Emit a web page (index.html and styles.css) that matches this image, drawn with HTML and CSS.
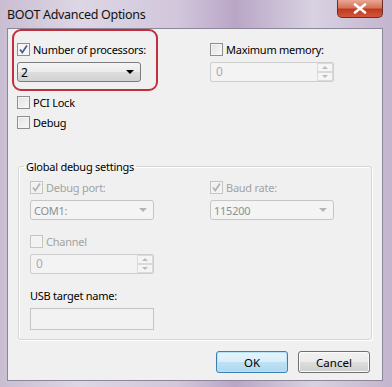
FILE: index.html
```html
<!DOCTYPE html>
<html lang="en">
<head>
    <meta charset="UTF-8">
    <title>BOOT Advanced Options</title>
    <link rel="stylesheet" href="styles.css">
</head>
<body>
    <div class="window">
        <div class="titlebar">
            <span class="title">BOOT Advanced Options</span>
            <button class="close" type="button">
                <svg width="14" height="11" viewBox="0 0 14 11"><path d="M2 1.5 L12 9.5 M12 1.5 L2 9.5" stroke="#fff" stroke-width="2.6" stroke-linecap="round"/></svg>
            </button>
        </div>

        <div class="client">
            <div class="highlight"></div>

            <div class="options">
                <div class="field">
                    <label class="check"><span class="box checked"><svg width="11" height="11" viewBox="0 0 11 11"><path d="M2 5.5 L4.3 8.5 L9 1.5" fill="none" stroke="#4b6191" stroke-width="1.8"/></svg></span>Number of processors:</label>
                    <div class="combo"><span>2</span><span class="arrow"></span></div>
                </div>
                <div class="field">
                    <label class="check"><span class="box"></span>Maximum memory:</label>
                    <div class="spin"><span>0</span><span class="spin-btns"><span class="up"></span><span class="down"></span></span></div>
                </div>
            </div>

            <div class="flags">
                <label class="check"><span class="box"></span>PCI Lock</label>
                <label class="check"><span class="box"></span>Debug</label>
            </div>

            <fieldset class="group">
                <legend>Global debug settings</legend>
                <div class="group-grid">
                    <div class="field">
                        <label class="check off"><span class="box checked"><svg width="11" height="11" viewBox="0 0 11 11"><path d="M2 5.5 L4.3 8.5 L9 1.5" fill="none" stroke="#b4b4b4" stroke-width="1.8"/></svg></span>Debug port:</label>
                        <div class="combo off"><span>COM1:</span><span class="arrow"></span></div>
                    </div>
                    <div class="field">
                        <label class="check off"><span class="box checked"><svg width="11" height="11" viewBox="0 0 11 11"><path d="M2 5.5 L4.3 8.5 L9 1.5" fill="none" stroke="#b4b4b4" stroke-width="1.8"/></svg></span>Baud rate:</label>
                        <div class="combo off"><span>115200</span><span class="arrow"></span></div>
                    </div>
                    <div class="field">
                        <label class="check off"><span class="box"></span>Channel</label>
                        <div class="spin"><span>0</span><span class="spin-btns"><span class="up"></span><span class="down"></span></span></div>
                    </div>
                    <div></div>
                    <div class="field">
                        <span class="label">USB target name:</span>
                        <div class="textbox"></div>
                    </div>
                </div>
            </fieldset>

            <div class="buttons">
                <button class="btn default" type="button">OK</button>
                <button class="btn" type="button">Cancel</button>
            </div>
        </div>
    </div>
</body>
</html>
```

FILE: styles.css
```css
body {
    margin: 0;
    font-family: "Noto Sans", "Open Sans", sans-serif;
    font-size: 11px;
    letter-spacing: -0.25px;
    color: #000;
}

.window {
    width: 392px;
    height: 387px;
    box-sizing: border-box;
    display: flex;
    flex-direction: column;
    padding: 0 9px 6px 7px;
    background: linear-gradient(90deg, #c9bdd2 0%, #ddd6e4 20%, #d2c7dc 45%, #b9a6c6 60%, #d9d2e2 80%, #c2b4cd 100%);
}

.titlebar {
    height: 28px;
    display: flex;
    justify-content: space-between;
    align-items: flex-start;
}

.title {
    font-size: 12.5px;
    letter-spacing: -0.3px;
    line-height: 14px;
    margin-top: 8px;
    color: #111;
}

.close {
    width: 46px;
    height: 18px;
    margin: 0;
    padding: 0;
    border: 1px solid #6b2d2a;
    border-top: none;
    border-radius: 0 0 5px 5px;
    background: linear-gradient(#e8a893 0%, #d67459 45%, #c0391f 55%, #d2573a 100%);
    display: flex;
    align-items: center;
    justify-content: center;
}

.client {
    flex: 1;
    position: relative;
    background: #f0f0f0;
    border: 1px solid #8c8699;
    padding: 13px 0 0 0;
}

.highlight {
    position: absolute;
    left: 4px;
    top: 0;
    width: 142px;
    height: 58px;
    border: 2px solid #c42d3c;
    border-radius: 9px;
}

.options {
    display: grid;
    grid-template-columns: 124px 124px;
    column-gap: 69px;
    padding-left: 9px;
}

.field {
    display: flex;
    flex-direction: column;
    gap: 5px;
}

.check {
    display: flex;
    align-items: center;
    height: 15px;
    line-height: 15px;
    white-space: nowrap;
}

.check.off {
    color: #a3a3a3;
}

.label {
    height: 15px;
    line-height: 15px;
}

.box {
    width: 11px;
    height: 11px;
    border: 1px solid #8f8f8f;
    background: linear-gradient(135deg, #e2e2e2, #f8f8f8);
    box-shadow: inset 0 0 0 1px #f4f4f4;
    margin-right: 3px;
    display: flex;
    align-items: center;
    justify-content: center;
}

.box.checked {
    background: #f6f6f6;
}

.check.off .box {
    border-color: #c4c4c4;
    background: #f2f2f2;
}

.combo {
    height: 20px;
    box-sizing: border-box;
    border: 1px solid #7c7c7c;
    border-radius: 3px;
    background: linear-gradient(#f4f4f4 0%, #ebebeb 50%, #dddddd 51%, #d2d2d2 100%);
    display: flex;
    align-items: center;
    justify-content: space-between;
    padding: 0 6px 0 3px;
    font-size: 12px;
}

.arrow {
    width: 0;
    height: 0;
    border-left: 4px solid transparent;
    border-right: 4px solid transparent;
    border-top: 4px solid #000;
}

.combo.off {
    border-color: #c6c6c6;
    background: #f4f4f4;
    color: #8f8f8f;
    font-size: 11px;
}

.combo.off .arrow {
    border-top-color: #b4b4b4;
}

.spin {
    height: 20px;
    box-sizing: border-box;
    border: 1px solid #cdcdcd;
    border-radius: 2px;
    background: #f3f3f3;
    display: flex;
    justify-content: space-between;
    padding-left: 5px;
    color: #ababab;
    line-height: 18px;
    font-size: 12px;
}

.spin-btns {
    width: 16px;
    display: flex;
    flex-direction: column;
}

.spin-btns span {
    flex: 1;
    display: flex;
    align-items: center;
    justify-content: center;
    border: 1px solid #dadada;
    background: #f5f5f5;
}

.spin-btns .up::after {
    content: "";
    border-left: 3px solid transparent;
    border-right: 3px solid transparent;
    border-bottom: 3px solid #bcbcbc;
}

.spin-btns .down::after {
    content: "";
    border-left: 3px solid transparent;
    border-right: 3px solid transparent;
    border-top: 3px solid #bcbcbc;
}

.flags {
    display: flex;
    flex-direction: column;
    gap: 5px;
    padding-left: 9px;
    margin-top: 13px;
}

.group {
    margin: 29px 10px 0 10px;
    padding: 6px 0 9px 11px;
    border: 1px solid #d6d6d6;
    border-radius: 3px;
    box-shadow: 1px 1px 0 #fff inset, 1px 1px 0 #fff;
}

.group legend {
    padding: 0 2px;
    margin-left: -6px;
    line-height: 15px;
}

.group-grid {
    display: grid;
    grid-template-columns: 124px 124px;
    column-gap: 56px;
    row-gap: 14px;
}

.textbox {
    height: 22px;
    box-sizing: border-box;
    border: 1px solid #c4c4c4;
    background: #f2f2f2;
}

.buttons {
    display: flex;
    justify-content: flex-end;
    gap: 10px;
    margin-top: 11px;
    padding-right: 12px;
}

.btn {
    width: 72px;
    height: 22px;
    margin: 0;
    font-family: inherit;
    font-size: 11.5px;
    color: #000;
    border: 1px solid #707070;
    border-radius: 3px;
    background: linear-gradient(#f2f2f2 0%, #ebebeb 50%, #dddddd 51%, #cfcfcf 100%);
    box-shadow: inset 0 0 0 1px #fbfbfb;
}

.btn.default {
    border-color: #3c7fb1;
    background: linear-gradient(#e5f4fc 0%, #d9eef9 50%, #bfe2f5 51%, #acd8ef 100%);
    box-shadow: inset 0 0 0 1px #b8e3f7;
}
```
